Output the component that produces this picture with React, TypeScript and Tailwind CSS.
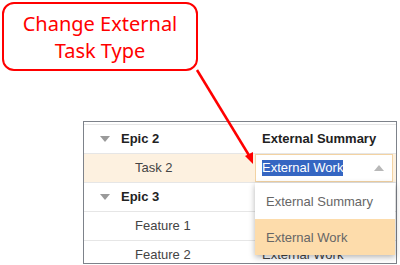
import React from 'react';

const rows = [
  { label: 'Epic 2', epic: true, value: 'External Summary', header: true },
  { label: 'Task 2', epic: false, value: '', active: true },
  { label: 'Epic 3', epic: true, value: '' },
  { label: 'Feature 1', epic: false, value: '' },
  { label: 'Feature 2', epic: false, value: 'External Work' },
];

function Caret({ up = false, className = '' }: { up?: boolean; className?: string }) {
  return (
    <svg width="10" height="6" viewBox="0 0 10 6" className={className}>
      <polygon points={up ? '0,6 10,6 5,0' : '0,0 10,0 5,6'} fill="currentColor" />
    </svg>
  );
}

export default function App() {
  return (
    <div className="relative w-[400px] h-[265px] overflow-hidden bg-white font-['Liberation_Sans',Arial,sans-serif]">
      {/* Callout */}
      <div className="ml-[2px] mt-[2px] w-[196px] h-[69px] rounded-[12px] border-2 border-[#ff0000] flex flex-col items-center justify-center text-[#ff0000] text-[20px] leading-[27px] font-['Noto_Sans',sans-serif]">
        <span>Change External</span>
        <span>Task Type</span>
      </div>

      {/* Grid */}
      <div className="ml-[83px] mt-[50px] w-[314px] h-[143px] overflow-hidden border border-[#7d828a] bg-white">
        <div className="mt-[2px] border-t border-[#e6e6e6]" />
        {rows.map((row) => (
          <div
            key={row.label}
            className={`flex h-[29px] border-b border-[#e6e6e6] text-[13px] ${row.active ? 'bg-[#fdf1e0]' : ''}`}
          >
            <div className="w-[171px] flex items-center">
              {row.epic ? (
                <>
                  <Caret className="ml-[16px] text-[#9a9a9a]" />
                  <span className="ml-[11px] font-bold text-[#222]">{row.label}</span>
                </>
              ) : (
                <span className="ml-[51px] text-[#444]">{row.label}</span>
              )}
            </div>
            <div className="flex-1 flex items-center">
              {row.active ? (
                <div className="w-[138px] h-[28px] border border-[#f3d3a3] bg-white flex items-center justify-between pl-[6px] pr-[8px]">
                  <span className="bg-[#3566c2] text-white leading-[16px]">External Work</span>
                  <Caret up className="text-[#b8b8b8]" />
                </div>
              ) : row.header ? (
                <span className="ml-[7px] font-bold text-[#222]">{row.value}</span>
              ) : (
                <span className="ml-[7px] text-[#444]">{row.value}</span>
              )}
            </div>
          </div>
        ))}
      </div>

      {/* Dropdown list */}
      <div className="absolute left-[255px] top-[183px] w-[140px] bg-white shadow-[0_2px_6px_rgba(0,0,0,0.3)] text-[13px] text-[#666]">
        <div className="h-[36px] flex items-center pl-[11px] pt-[2px]">External Summary</div>
        <div className="h-[36px] flex items-center pl-[11px] pt-[2px] bg-[#fddcab]">External Work</div>
      </div>

      {/* Arrow */}
      <svg className="absolute left-0 top-0 pointer-events-none" width="400" height="265">
        <line x1="197" y1="70" x2="250" y2="157" stroke="#ff0000" strokeWidth="2.5" />
        <polygon points="253,164 245,156 253,152" fill="#ff0000" />
      </svg>
    </div>
  );
}
